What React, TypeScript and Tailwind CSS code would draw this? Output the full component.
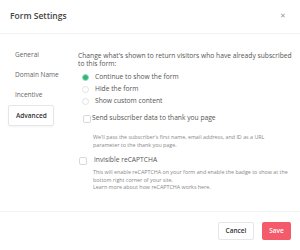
import React from "react";

function Radio({ checked }: { checked?: boolean }) {
  return checked ? (
    <span className="w-[7px] h-[7px] rounded-full bg-[#2fb67c] border border-[#9fdcc0] shrink-0" />
  ) : (
    <span className="w-[7px] h-[7px] rounded-full bg-white border border-[#e2e2e2] shrink-0" />
  );
}

function Checkbox() {
  return <span className="w-[8px] h-[8px] rounded-[2px] bg-white border border-[#d9d9d9] shrink-0" />;
}

export default function App() {
  return (
    <div
      className="w-[300px] h-[250px] bg-white flex flex-col text-[#555]"
      style={{ fontFamily: '"Open Sans", sans-serif' }}
    >
      <div className="h-[34px] flex items-center justify-between pl-[10px] pr-[14px] border-b border-[#f2f2f2] shrink-0">
        <span className="text-[8.5px] font-semibold text-[#444]">Form Settings</span>
        <span className="text-[7px] text-[#999]">✕</span>
      </div>
      <div className="flex flex-1 pt-[11px]">
        <div className="w-[78px] shrink-0 pl-[8px] flex flex-col">
          <div className="text-[6.5px] text-[#666] pl-[7px] h-[20px] flex items-center">General</div>
          <div className="text-[6.5px] text-[#666] pl-[7px] h-[20px] flex items-center">Domain Name</div>
          <div className="text-[6.5px] text-[#666] pl-[7px] h-[20px] flex items-center">Incentive</div>
          <div className="text-[6.5px] text-[#333] font-semibold pl-[7px] h-[21px] w-[46px] flex items-center border border-[#e6e6e6] rounded-[2px] shadow-[0_1px_2px_rgba(0,0,0,0.05)]">
            Advanced
          </div>
        </div>
        <div className="flex-1 pr-[6px] pt-[7px] flex flex-col">
          <div className="text-[6.7px] leading-[8px] text-[#555]">
            Change what's shown to return visitors who have already subscribed to this form:
          </div>
          <div className="mt-[5px] flex flex-col gap-[4px]">
            <div className="flex items-center gap-[6px] pl-[4px] h-[8px]">
              <Radio checked />
              <span className="text-[6.7px] text-[#555]">Continue to show the form</span>
            </div>
            <div className="flex items-center gap-[6px] pl-[4px] h-[8px]">
              <Radio />
              <span className="text-[6.7px] text-[#555]">Hide the form</span>
            </div>
            <div className="flex items-center gap-[6px] pl-[4px] h-[8px]">
              <Radio />
              <span className="text-[6.7px] text-[#555]">Show custom content</span>
            </div>
          </div>
          <div className="mt-[9px] h-[9px] flex items-center gap-[1px] pl-[5px]">
            <Checkbox />
            <span className="text-[6.7px] text-[#555]">Send subscriber data to thank you page</span>
          </div>
          <div className="mt-[11px] pl-[15px] text-[5.35px] leading-[7.5px] text-[#888]">
            We'll pass the subscriber's first name, email address, and ID as a URL
            <br />
            parameter to the thank you page.
          </div>
          <div className="mt-[7px] h-[9px] flex items-center gap-[7px] pl-[1px]">
            <Checkbox />
            <span className="text-[6.7px] text-[#555]">Invisible reCAPTCHA</span>
          </div>
          <div className="mt-[4px] pl-[15px] text-[5.35px] leading-[7.5px] text-[#888]">
            This will enable reCAPTCHA on your form and enable the badge to show at the
            <br />
            bottom right corner of your site.
            <br />
            Learn more about how reCAPTCHA works here.
          </div>
        </div>
      </div>
      <div className="h-[39px] border-t border-[#f2f2f2] flex items-center justify-end gap-[8px] pr-[9px] shrink-0">
        <button className="h-[18px] w-[36px] bg-white border border-[#e6e6e6] rounded-[2px] text-[6.5px] text-[#333] font-semibold">
          Cancel
        </button>
        <button className="h-[18px] w-[29px] bg-[#f55a6a] rounded-[2px] text-[6.5px] text-white font-semibold">
          Save
        </button>
      </div>
    </div>
  );
}
